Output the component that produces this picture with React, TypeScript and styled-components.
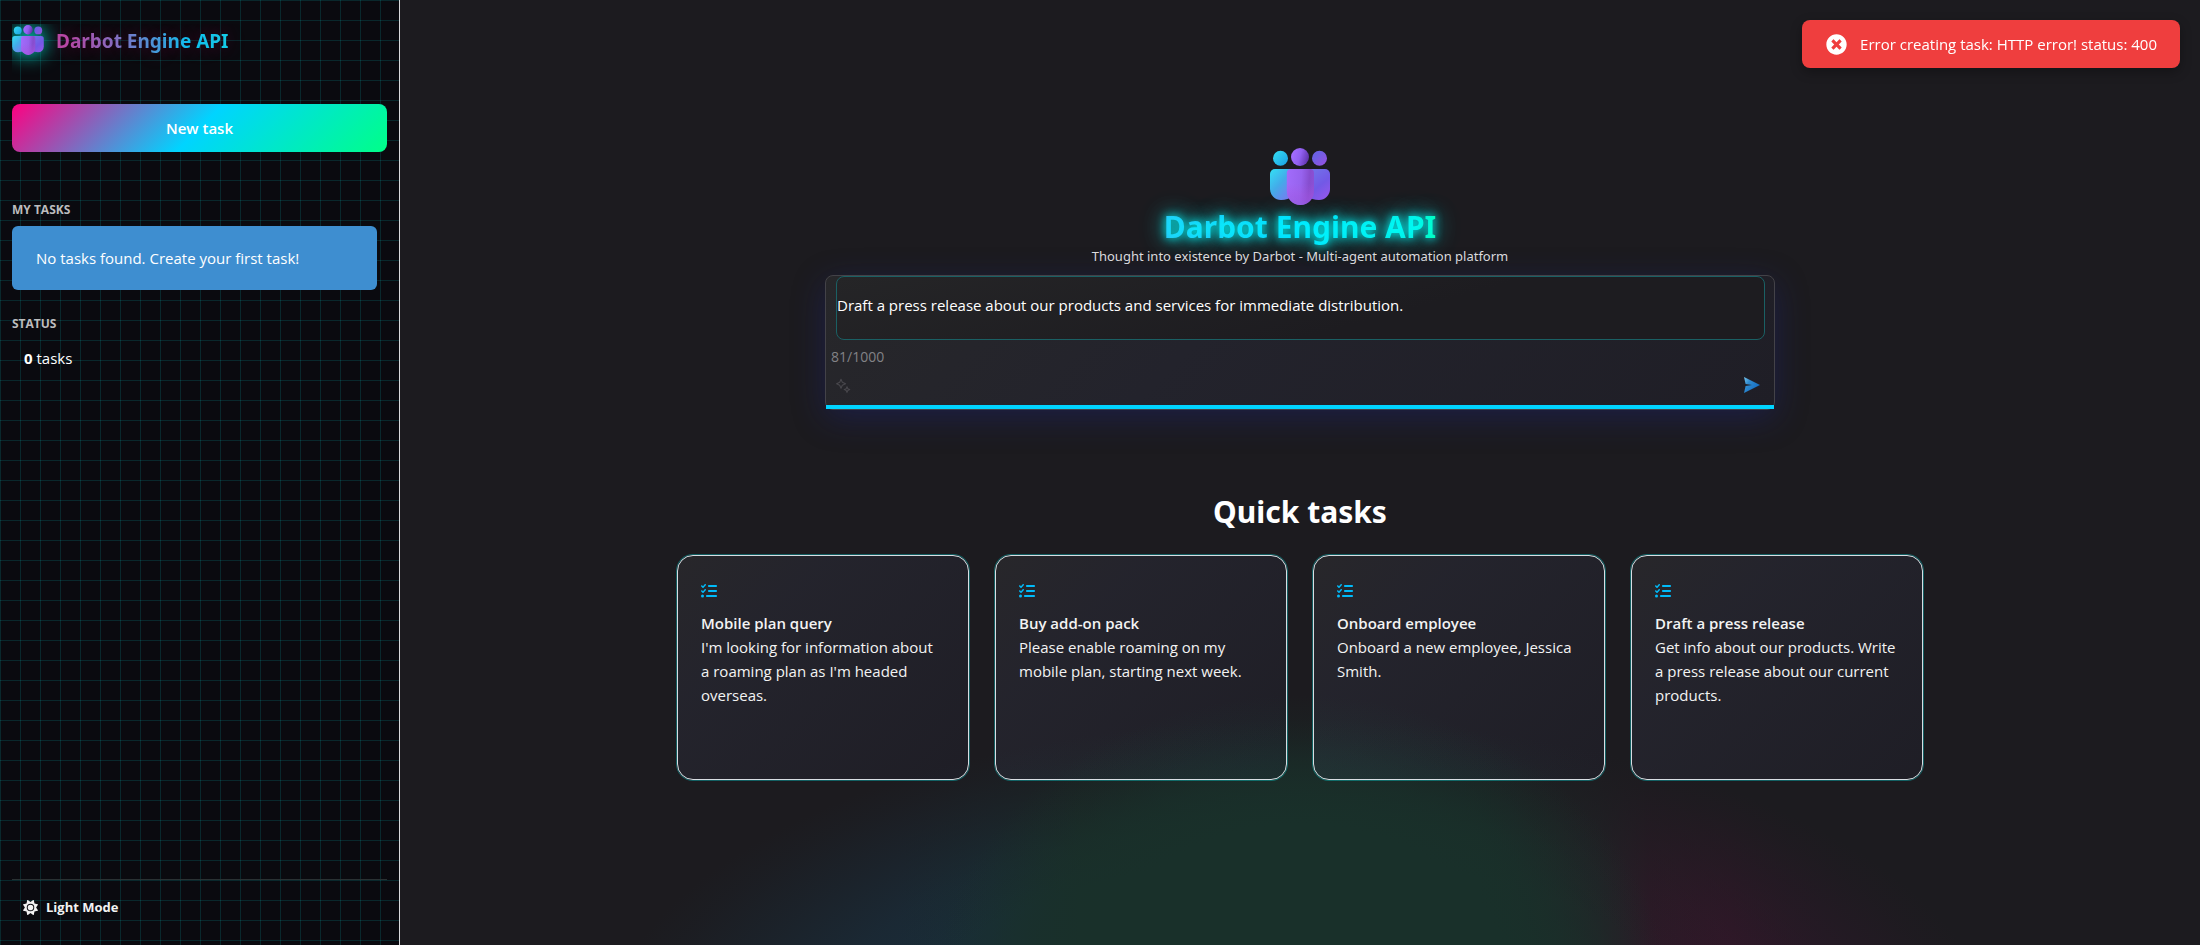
import React, { useState } from "react";
import styled, { createGlobalStyle } from "styled-components";
import { FaTimesCircle } from "react-icons/fa";
import { FaListCheck, FaSun } from "react-icons/fa6";

const bodyFont = `"Segoe UI", "Open Sans", "Noto Sans", sans-serif`;
const headingFont = `"Segoe UI", "Noto Sans", "Open Sans", sans-serif`;

const GlobalStyle = createGlobalStyle`
  *, *::before, *::after { box-sizing: border-box; }
  body {
    margin: 0;
    background: #1c1b1f;
    color: #fff;
    font: 400 15px/24px ${bodyFont};
  }
  h1, h2, h3, p { margin: 0; }
  button, textarea { font: inherit; color: inherit; }
  button { margin: 0; padding: 0; border: 0; background: none; cursor: pointer; }
  svg { display: block; flex: none; }
`;

const Shell = styled.div`
  display: flex;
  min-height: 100vh;
`;

/* ---------- Sidebar ---------- */

const Sidebar = styled.aside`
  display: flex;
  flex: 0 0 400px;
  flex-direction: column;
  padding: 24px 12px 28px;
  border-right: 1px solid #d9d9dc;
  background:
    linear-gradient(rgba(0, 255, 255, 0.12) 1px, transparent 1px) 0 0 / 20px 20px,
    linear-gradient(90deg, rgba(0, 255, 255, 0.12) 1px, transparent 1px) 0 0 / 20px 20px,
    #0a0a0f;
`;

const Brand = styled.header`
  display: flex;
  align-items: center;
  gap: 12px;
  height: 56px;
  padding-bottom: 24px;
  overflow: hidden;

  svg {
    filter: drop-shadow(0 0 10px #00f0dc);
  }
`;

const BrandName = styled.h2`
  padding-top: 2px;
  font: 700 19px/28px ${headingFont};
  color: transparent;
  background: linear-gradient(90deg, #bf44a3, #7c78ca 36%, #00cdf8 78%, #0cd6ec);
  background-clip: text;
  -webkit-background-clip: text;
  text-shadow: 0 0 20px rgba(255, 0, 128, 0.3);
`;

const NewTaskButton = styled.button`
  height: 48px;
  margin-top: 24px;
  border-radius: 8px;
  background: linear-gradient(135deg, #ff0080 0%, #00d4ff 50%, #00ff88 100%);
  font-weight: 600;
`;

const SectionLabel = styled.h3<{ $gap: number }>`
  margin-top: ${(p) => p.$gap}px;
  color: #bcbcbe;
  font-size: 12px;
  font-weight: 700;
  line-height: 18px;
  text-transform: uppercase;
`;

const Notice = styled.p`
  margin: 7px 10px 0 0;
  padding: 20px 24px;
  border-radius: 6px;
  background: #3e8ed0;
`;

const StatusLine = styled.p`
  padding: 13px 12px 0;
`;

const SidebarFooter = styled.footer`
  margin-top: auto;
  padding: 17px 11px 0;
  border-top: 1px solid #2a3133;
`;

const ThemeButton = styled.button`
  display: flex;
  align-items: center;
  gap: 8px;
  color: #f2f2f2;
  font-size: 13px;
  font-weight: 700;
  line-height: 20px;
`;

/* ---------- Main column ---------- */

const Main = styled.main`
  display: flex;
  flex: 1;
  flex-direction: column;
  align-items: center;
  min-width: 0;
  padding: 148px 24px 24px;
  background:
    radial-gradient(
      ellipse 370px 310px at 50% calc(100% + 60px),
      #19302a 58%,
      rgba(25, 48, 42, 0.7) 73%,
      rgba(25, 48, 42, 0.3) 86%,
      rgba(25, 48, 42, 0) 100%
    ),
    radial-gradient(
      ellipse 700px 330px at 50% calc(100% + 105px),
      transparent 58%,
      rgba(28, 27, 31, 0.2) 70%,
      rgba(28, 27, 31, 0.58) 83%,
      rgba(28, 27, 31, 0.88) 94%,
      #1c1b1f 100%
    ),
    linear-gradient(
      90deg,
      #1a2c39 calc(50% - 400px),
      #192e35 calc(50% - 310px),
      #19302b calc(50% - 220px),
      #19302a calc(50% + 180px),
      #222327 calc(50% + 300px),
      #2c1a27 calc(50% + 350px),
      #33172a calc(50% + 430px),
      #2f182b calc(50% + 520px)
    );
`;

const Title = styled.h1`
  margin-top: 3px;
  font: 700 30px/38px ${headingFont};
  color: transparent;
  background: linear-gradient(90deg, #3fa8f4, #00d4ff 50%, #00ecd8 92%, #00ff99);
  background-clip: text;
  -webkit-background-clip: text;
  text-shadow:
    0 0 10px #00ffff,
    0 0 20px rgba(0, 255, 255, 0.7),
    0 0 30px rgba(0, 255, 255, 0.3);
`;

const Tagline = styled.p`
  color: #dededf;
  font: 400 13px/20px ${headingFont};
`;

const Composer = styled.form`
  width: 100%;
  max-width: 950px;
  margin-top: 9px;
  border: 1px solid #434248;
  border-radius: 8px;
  background: linear-gradient(135deg, #27272a 0%, #23232c 40%, #1f1e26 100%);
  box-shadow: 0 8px 32px rgba(31, 38, 135, 0.37);
`;

const PromptField = styled.textarea`
  display: block;
  width: calc(100% - 19px);
  height: 64px;
  margin: 0 9px 0 10px;
  padding: 16px 0;
  border: 1px solid #1a6064;
  border-radius: 8px;
  background: linear-gradient(165deg, #252527 0%, #1d1c20 60%);
  line-height: 24px;
  outline: none;
  resize: none;
`;

const Counter = styled.p`
  margin: 7px 5px 0;
  color: #828286;
  font-size: 14px;
  line-height: 20px;
`;

const Toolbar = styled.div`
  display: flex;
  justify-content: space-between;
  padding: 10px 14px 12px 10px;
`;

const AccentBar = styled.div`
  height: 4px;
  background: #00d4ff;
`;

const QuickHeading = styled.h2`
  margin-top: 82px;
  font: 700 30px/40px ${headingFont};
`;

const CardGrid = styled.div`
  display: grid;
  grid-template-columns: repeat(4, 1fr);
  gap: 26px;
  width: 100%;
  max-width: 1246px;
  margin-top: 23px;
`;

const Card = styled.button`
  display: flex;
  flex-direction: column;
  min-height: 225px;
  padding: 27px 25px 24px 23px;
  border: 1px solid #d8dde2;
  border-radius: 16px;
  background: linear-gradient(
    135deg,
    rgba(255, 255, 255, 0.05) 0%,
    rgba(140, 150, 220, 0.07) 30%,
    rgba(90, 95, 200, 0.04) 100%
  );
  box-shadow: 0 0 0 1px rgba(0, 255, 255, 0.3);
  color: #f3f3f3;
  text-align: left;

  svg {
    margin-bottom: 12px;
    color: #00bbfa;
  }
`;

const CardTitle = styled.strong`
  font-weight: 600;
`;

/* ---------- Toast ---------- */

const Toast = styled.div`
  position: fixed;
  top: 20px;
  right: 20px;
  display: flex;
  align-items: center;
  gap: 13px;
  padding: 12px 23px 12px 24px;
  border-radius: 8px;
  background: #ef3e3e;
  box-shadow: 0 4px 12px rgba(0, 0, 0, 0.3);
`;

/* ---------- Drawings ---------- */

function TeamLogo({ id, width, height }: { id: string; width: number; height: number }) {
  const fill = (name: string) => `url(#${id}-${name})`;
  return (
    <svg width={width} height={height} viewBox="0 0 60 57" aria-hidden="true">
      <defs>
        <linearGradient id={`${id}-lh`} x1="0" y1="0" x2="1" y2="1">
          <stop offset="0" stopColor="#35dff2" />
          <stop offset="1" stopColor="#1b9ee4" />
        </linearGradient>
        <linearGradient id={`${id}-lb`} x1="0" y1="0" x2="0.8" y2="1">
          <stop offset="0" stopColor="#33e0f4" />
          <stop offset="0.5" stopColor="#43abe9" />
          <stop offset="1" stopColor="#7a7af0" />
        </linearGradient>
        <linearGradient id={`${id}-rh`} x1="0" y1="0" x2="1" y2="1">
          <stop offset="0.3" stopColor="#6c60e4" />
          <stop offset="1" stopColor="#9a4fe0" />
        </linearGradient>
        <linearGradient id={`${id}-rb`} x1="0.2" y1="0" x2="0.8" y2="1">
          <stop offset="0" stopColor="#7273ea" />
          <stop offset="0.55" stopColor="#7259e6" />
          <stop offset="1" stopColor="#9457ea" />
        </linearGradient>
        <linearGradient id={`${id}-ch`} x1="0" y1="0.3" x2="1" y2="0.6">
          <stop offset="0" stopColor="#a56eff" />
          <stop offset="0.5" stopColor="#9160f0" />
          <stop offset="1" stopColor="#5e31a8" />
        </linearGradient>
        <linearGradient id={`${id}-cb`} x1="0" y1="0" x2="1" y2="0.1">
          <stop offset="0" stopColor="#a26cfb" />
          <stop offset="0.55" stopColor="#9763ee" />
          <stop offset="0.85" stopColor="#864dce" />
          <stop offset="1" stopColor="#8b4fd4" />
        </linearGradient>
        <linearGradient id={`${id}-cs`} x1="0" y1="0" x2="0" y2="1">
          <stop offset="0.4" stopColor="#a855e0" stopOpacity="0" />
          <stop offset="1" stopColor="#a855e0" stopOpacity="0.7" />
        </linearGradient>
      </defs>
      <circle cx="10.5" cy="10.3" r="7.5" fill={fill("lh")} />
      <circle cx="49.5" cy="10.3" r="7.5" fill={fill("rh")} />
      <circle cx="30" cy="9" r="9" fill={fill("ch")} />
      <path d="M5 21H23V48Q18 52 11 52A11 11 0 0 1 0 41V26A5 5 0 0 1 5 21Z" fill={fill("lb")} />
      <path d="M55 21H37V48Q42 52 49 52A11 11 0 0 0 60 41V26A5 5 0 0 0 55 21Z" fill={fill("rb")} />
      <path d="M21 21H40A4 4 0 0 1 44 25V43A13.6 14 0 0 1 16.8 43V25A4 4 0 0 1 21 21Z" fill={fill("cb")} />
      <path d="M21 21H40A4 4 0 0 1 44 25V43A13.6 14 0 0 1 16.8 43V25A4 4 0 0 1 21 21Z" fill={fill("cs")} />
    </svg>
  );
}

function SparkleIcon() {
  return (
    <svg width="16" height="16" viewBox="0 0 16 16" fill="none" stroke="#48474c" strokeWidth="1.1" strokeLinejoin="round" aria-hidden="true">
      <path d="M5 2.2L6.3 5.2L9.6 6.7L6.3 8.2L5 11.2L3.7 8.2L0.6 6.7L3.7 5.2Z" />
      <path d="M11 9.8L11.8 11.7L13.7 12.6L11.8 13.5L11 15.4L10.2 13.5L8.3 12.6L10.2 11.7Z" />
    </svg>
  );
}

function SendIcon() {
  return (
    <svg width="16" height="16" viewBox="0 0 16 16" aria-hidden="true">
      <defs>
        <linearGradient id="send" x1="0" y1="0" x2="1" y2="0.7">
          <stop offset="0" stopColor="#7cc8ee" />
          <stop offset="0.35" stopColor="#2f8bd0" />
          <stop offset="1" stopColor="#1068c0" />
        </linearGradient>
      </defs>
      <path d="M0 0L16 8L0 16L1.6 9L8 8L1.6 7Z" fill="url(#send)" />
    </svg>
  );
}

/* ---------- Page ---------- */

const quickTasks = [
  {
    title: "Mobile plan query",
    text: "I'm looking for information about a roaming plan as I'm headed overseas.",
  },
  {
    title: "Buy add-on pack",
    text: "Please enable roaming on my mobile plan, starting next week.",
  },
  {
    title: "Onboard employee",
    text: "Onboard a new employee, Jessica Smith.",
  },
  {
    title: "Draft a press release",
    text: "Get info about our products. Write a press release about our current products.",
  },
];

export default function App() {
  const [prompt, setPrompt] = useState(
    "Draft a press release about our products and services for immediate distribution."
  );

  return (
    <>
      <GlobalStyle />
      <Shell>
        <Sidebar>
          <Brand>
            <TeamLogo id="brand" width={32} height={30} />
            <BrandName>Darbot Engine API</BrandName>
          </Brand>
          <NewTaskButton type="button">New task</NewTaskButton>
          <SectionLabel $gap={49}>My tasks</SectionLabel>
          <Notice>No tasks found. Create your first task!</Notice>
          <SectionLabel $gap={25}>Status</SectionLabel>
          <StatusLine>
            <strong>0</strong> tasks
          </StatusLine>
          <SidebarFooter>
            <ThemeButton type="button">
              <FaSun size={15} />
              Light Mode
            </ThemeButton>
          </SidebarFooter>
        </Sidebar>

        <Main>
          <TeamLogo id="hero" width={60} height={57} />
          <Title>Darbot Engine API</Title>
          <Tagline>Thought into existence by Darbot - Multi-agent automation platform</Tagline>

          <Composer onSubmit={(e) => e.preventDefault()}>
            <PromptField
              aria-label="Task description"
              maxLength={1000}
              value={prompt}
              onChange={(e) => setPrompt(e.target.value)}
            />
            <Counter>{prompt.length}/1000</Counter>
            <Toolbar>
              <button type="button" aria-label="Improve prompt">
                <SparkleIcon />
              </button>
              <button type="submit" aria-label="Send">
                <SendIcon />
              </button>
            </Toolbar>
            <AccentBar />
          </Composer>

          <QuickHeading>Quick tasks</QuickHeading>
          <CardGrid>
            {quickTasks.map((task) => (
              <Card key={task.title} type="button" onClick={() => setPrompt(task.text)}>
                <FaListCheck size={16} />
                <CardTitle>{task.title}</CardTitle>
                <span>{task.text}</span>
              </Card>
            ))}
          </CardGrid>
        </Main>
      </Shell>

      <Toast role="alert">
        <FaTimesCircle size={21} />
        Error creating task: HTTP error! status: 400
      </Toast>
    </>
  );
}
